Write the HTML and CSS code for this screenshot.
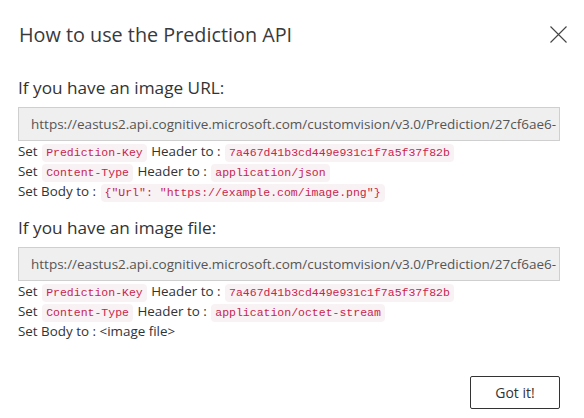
FILE: index.html
```html
<!DOCTYPE html>
<html lang="en">
<head>
<meta charset="utf-8">
<title>How to use the Prediction API</title>
<link rel="stylesheet" href="styles.css">
</head>
<body>
<div class="dialog">
  <div class="header">
    <h1 class="title">How to use the Prediction API</h1>
    <button class="close" aria-label="Close">
      <svg width="17" height="17" viewBox="0 0 17 17"><path d="M0.5 0.5 L16.5 16.5 M16.5 0.5 L0.5 16.5" stroke="#444" stroke-width="1.1" fill="none"/></svg>
    </button>
  </div>

  <section class="section">
    <h2 class="subtitle">If you have an image URL:</h2>
    <div class="url">https://eastus2.api.cognitive.microsoft.com/customvision/v3.0/Prediction/27cf6ae6-</div>
    <div class="row">Set <code>Prediction-Key</code> Header to : <code>7a467d41b3cd449e931c1f7a5f37f82b</code></div>
    <div class="row">Set <code>Content-Type</code> Header to : <code>application/json</code></div>
    <div class="row">Set Body to : <code>{"Url": "https://example.com/image.png"}</code></div>
  </section>

  <section class="section second">
    <h2 class="subtitle">If you have an image file:</h2>
    <div class="url">https://eastus2.api.cognitive.microsoft.com/customvision/v3.0/Prediction/27cf6ae6-</div>
    <div class="row">Set <code>Prediction-Key</code> Header to : <code>7a467d41b3cd449e931c1f7a5f37f82b</code></div>
    <div class="row">Set <code>Content-Type</code> Header to : <code>application/octet-stream</code></div>
    <div class="row">Set Body to : &lt;image file&gt;</div>
  </section>

  <div class="footer">
    <button class="btn">Got it!</button>
  </div>
</div>
</body>
</html>
```

FILE: styles.css
```css
html, body {
  margin: 0;
  padding: 0;
  background: #ffffff;
}

body {
  font-family: "Open Sans", "Noto Sans", sans-serif;
  color: #333333;
  width: 584px;
  height: 418px;
  overflow: hidden;
}

.dialog {
  display: flex;
  flex-direction: column;
  padding: 21px 24px 0 18px;
  height: 418px;
  box-sizing: border-box;
}

.header {
  display: flex;
  justify-content: space-between;
  align-items: flex-start;
}

.title {
  margin: 0;
  font-size: 19.8px;
  font-weight: 400;
  line-height: 28px;
  color: #3a3a3a;
  padding-left: 1px;
}

.close {
  margin: 5px -7px 0 0;
  padding: 0;
  border: none;
  background: none;
  width: 17px;
  height: 17px;
  display: block;
}

.close svg {
  display: block;
}

.section {
  display: flex;
  flex-direction: column;
  margin-top: 25px;
}

.section.second {
  margin-top: 13px;
}

.subtitle {
  margin: 0 0 5px 0;
  font-size: 17.2px;
  font-weight: 400;
  line-height: 28px;
  color: #333;
}

.url {
  height: 34px;
  box-sizing: border-box;
  border: 1px solid #cfcfcf;
  background: #efefef;
  padding: 0 12px;
  font-size: 13.5px;
  line-height: 32px;
  color: #555;
  white-space: nowrap;
  overflow: hidden;
}

.row {
  font-size: 13.4px;
  line-height: 20px;
  height: 20px;
  white-space: nowrap;
  color: #333;
}

code {
  font-family: "Liberation Mono", "DejaVu Sans Mono", monospace;
  font-size: 11.5px;
  line-height: 1;
  color: #c7254e;
  background: #f9f2f4;
  border-radius: 4px;
  padding: 3px 4px;
  margin: 0 1px;
  display: inline-block;
}

.footer {
  margin-top: auto;
  padding-bottom: 9px;
  display: flex;
  justify-content: flex-end;
}

.btn {
  width: 90px;
  height: 33px;
  border: 1px solid #333;
  border-radius: 2px;
  background: #fff;
  font-family: "Open Sans", "Noto Sans", sans-serif;
  font-size: 14px;
  color: #333;
  padding: 0;
}
```
